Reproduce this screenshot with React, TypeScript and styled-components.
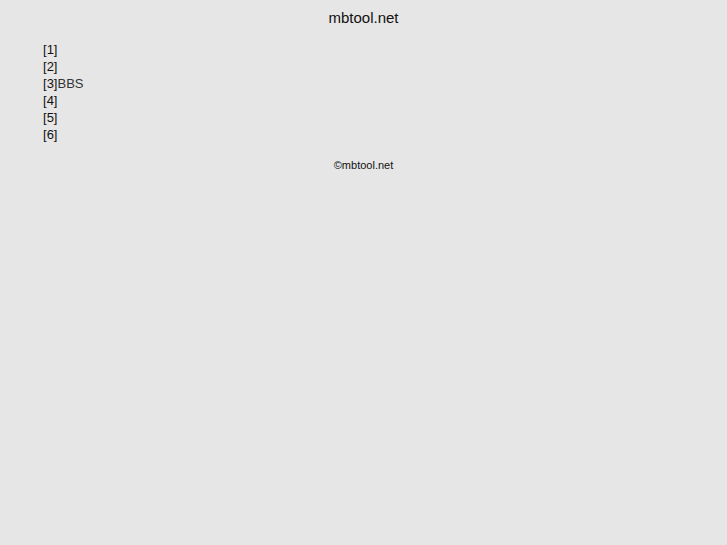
import styled, { createGlobalStyle } from "styled-components";

const GlobalStyle = createGlobalStyle`
  body {
    margin: 0;
    background: #e6e6e6;
    color: #111;
    font-family: "Liberation Sans", Arial, sans-serif;
  }
`;

const Page = styled.div`
  display: flex;
  flex-direction: column;
  gap: 12px;
  padding-top: 7px;
`;

const Title = styled.h1`
  margin: 0;
  font-size: 15px;
  line-height: 22px;
  font-weight: 400;
  text-align: center;
`;

const Menu = styled.ul`
  margin: 0;
  padding: 0 43px;
  list-style: none;
  font-size: 13px;
`;

const MenuItem = styled.li`
  line-height: 17px;
`;

const MenuLink = styled.a`
  color: #333;
  text-decoration: none;
`;

const Footer = styled.footer`
  font-size: 11px;
  line-height: 20px;
  text-align: center;
`;

const items = ["", "", "BBS", "", "", ""];

export default function App() {
  return (
    <>
      <GlobalStyle />
      <Page>
        <Title>mbtool.net</Title>
        <Menu>
          {items.map((label, index) => (
            <MenuItem key={index}>
              [{index + 1}]{label && <MenuLink href="#bbs">{label}</MenuLink>}
            </MenuItem>
          ))}
        </Menu>
        <Footer>©mbtool.net</Footer>
      </Page>
    </>
  );
}
